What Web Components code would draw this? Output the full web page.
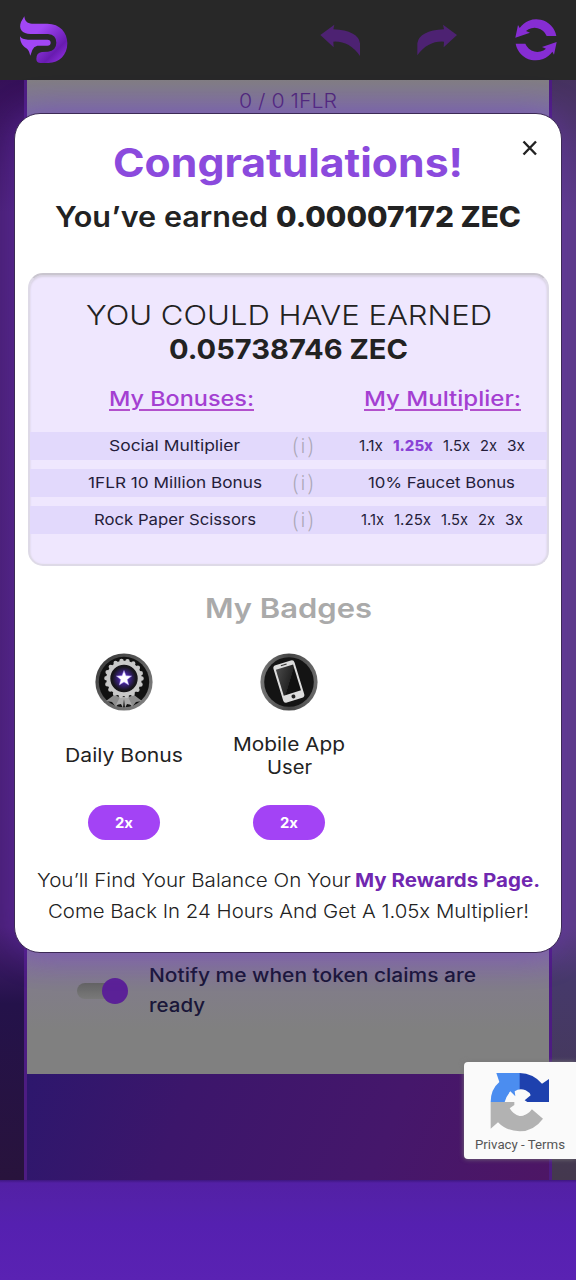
<!DOCTYPE html>
<html lang="en">
<head>
<meta charset="utf-8">
<title>Rewards</title>
<style>
html,body{margin:0;height:100%;background:#5720b2}
body{font-family:Inter,"Open Sans",sans-serif;color:#222}
</style>
</head>
<body>
<reward-app></reward-app>
<script>
const define=(name,html,ready)=>customElements.define(name,class extends HTMLElement{
  constructor(){super();this.attachShadow({mode:'open'}).innerHTML=html;}
  connectedCallback(){if(ready)ready(this,this.shadowRoot);}
});

/* Single line of text set to a given measure. */
define('fit-text',`<style>
:host{display:inline-block;white-space:nowrap;text-align:left;flex:none}
span{display:inline-block;transform-origin:0 50%;color:inherit}
:host([shade]) span{color:#a43fd2;text-decoration:underline;text-decoration-color:#b350cc;text-decoration-thickness:1.7px;text-underline-offset:2.5px}
</style><div><span><slot></slot></span></div>`,(el,root)=>{
  const w=+el.getAttribute('w'),s=root.querySelector('span');
  el.style.width=w+'px';
  s.style.transform='scaleX('+w/s.getBoundingClientRect().width+')';
});

define('top-bar',`<style>
:host{display:block;height:80px;background:#282828}
svg{display:block}
</style><svg width="576" height="80" viewBox="0 0 1728 240">
<defs><linearGradient id="g" x1="0" y1="0" x2="1" y2="1"><stop offset=".35" stop-color="#a146f5"/><stop offset=".75" stop-color="#681bb0"/><stop offset="1" stop-color="#9b35ed"/></linearGradient></defs>
<path fill="url(#g)" d="M73 49C74 62 81 71 96 71H142C180 71 202 98 202 130C202 165 178 189 145 189H122Q109 189 109 177Q109 158 126 156L144 155Q169 151 169 128Q169 104 144 102H92C66 102 55 86 63 66Z"/>
<path fill="#a146f5" d="M60 109Q66 119 84 119H142Q152 119 152 128Q152 137 142 137H112Q101 140 97 150L91 167C87 155 87 152 79 145C66 137 60 125 60 109Z"/>
<path fill="#4d2272" d="M961 105L1003 74L1000 88Q1074 92 1080 130L1080 168Q1047 122 1000 125L1001 142Z"/>
<path fill="#4d2272" d="M1371 105L1329 74L1332 88Q1258 92 1252 130L1252 166Q1284 122 1332 125L1331 142Z"/>
<g fill="#862dd3"><path d="M1669 108A61 61 0 0 0 1559 84L1554 75L1546 113L1590 98L1578 93A39 39 0 0 1 1640 108Z"/><path d="M1547 131A61 61 0 0 0 1657 155L1662 164L1670 126L1626 141L1638 146A39 39 0 0 1 1576 131Z"/></g>
</svg>`);

define('page-behind',`<style>
:host{display:grid;grid-template-columns:24px 528px 24px;height:1100px;background:#281343}
.l{background:linear-gradient(#351058 0,#482073 12%,#481f74 77%,#24124a 84%,#28133c 100%)}
.r{background:linear-gradient(#46325f 0,#5b3c84 12%,#5b3c84 77%,#46396a 82%,#44384e 100%)}
.m{display:flex;flex-direction:column;border:solid #4d1c82;border-width:0 3px;box-sizing:border-box;background:linear-gradient(112deg,#2d176d 0,#3c166b 30%,#45176b 68%,#4d1665 100%);background-size:100% 107px;background-position:bottom;background-repeat:no-repeat}
.c{height:994px;box-sizing:border-box;background:linear-gradient(#827e83 0,#7d73a0 34px,#8270a0 870px,#817d88 910px,#808080 950px);display:flex;flex-direction:column;justify-content:space-between}
.t{font-size:19.5px;line-height:42px;font-weight:300;color:#4e2777;text-align:center}
.n{display:flex;height:114px;padding-left:50px;color:#191638;font-weight:500;font-size:18.6px;line-height:30px}
.sw{width:51px;height:26px;margin:18px 21px 0 0;display:flex;align-items:center;background:none}
.sw b{width:38px;height:16px;border-radius:8px 0 0 8px;background:linear-gradient(#646464,#797979);margin-right:-13px}
.sw i{width:26px;height:26px;border-radius:50%;background:#5b2197}
.n div:last-child{display:flex;flex-direction:column}
</style><div class="l"></div><div class="m"><div class="c"><div class="t"><fit-text w="98">0 / 0 1FLR</fit-text></div>
<div class="n"><div class="sw"><b></b><i></i></div><div><fit-text w="327">Notify me when token claims are</fit-text><fit-text w="56">ready</fit-text></div></div></div></div><div class="r"></div>`);

define('bonus-row',`<style>
:host{display:flex;align-items:center;height:28px;margin-bottom:9px;background:#e2d9fc;font-size:15px;line-height:28px;color:#251d3a}
.a{width:262px;padding-left:27px;box-sizing:border-box;display:flex;justify-content:center;flex:none}
.i{width:22px;color:#aaa7b6;font:20px/28px Roboto,sans-serif;text-align:center;flex:none}
.b{width:233px;padding-left:22px;box-sizing:border-box;display:flex;justify-content:center;gap:10px;flex:none}
</style><div class="a"><slot name="name"></slot></div><div class="i"><fit-text w="20">( i )</fit-text></div><div class="b"><slot></slot></div>`);

define('bonus-panel',`<style>
:host{display:block;box-sizing:border-box;width:521px;height:293px;margin-left:13px;padding-top:23px;border-radius:15px;background:#efe7fe;border:2px solid #dedae7;border-top-color:#c9c5cf;box-shadow:inset 0 2px 2px #d8d2e2,inset 0 0 2px #e2dbee;text-align:center}
.h{font-size:27.5px;line-height:34px;height:34px}
.x{font-weight:300}.y{font-weight:700}
.k{display:flex;padding:18px 0 0 79px;gap:110px;height:49px;box-sizing:border-box;font-size:20.6px;line-height:30px;font-weight:500;margin-bottom:17px}
.on{color:#8a42d6;font-weight:800}
</style>
<div class="h x"><fit-text w="406">YOU COULD HAVE EARNED</fit-text></div>
<div class="h y"><fit-text w="239">0.05738746 ZEC</fit-text></div>
<div class="k"><fit-text shade w="145">My Bonuses:</fit-text><fit-text shade w="157">My Multiplier:</fit-text></div>
<div>
<bonus-row><fit-text slot="name" w="131">Social Multiplier</fit-text><fit-text w="24">1.1x</fit-text><fit-text class="on" w="40">1.25x</fit-text><fit-text w="27">1.5x</fit-text><fit-text w="17">2x</fit-text><fit-text w="18">3x</fit-text></bonus-row>
<bonus-row><fit-text slot="name" w="174">1FLR 10 Million Bonus</fit-text><fit-text w="147">10% Faucet Bonus</fit-text></bonus-row>
<bonus-row><fit-text slot="name" w="162">Rock Paper Scissors</fit-text><fit-text w="23">1.1x</fit-text><fit-text w="37">1.25x</fit-text><fit-text w="27">1.5x</fit-text><fit-text w="17">2x</fit-text><fit-text w="18">3x</fit-text></bonus-row>
</div>`);

define('badge-item',`<style>
:host{display:flex;flex-direction:column;align-items:center;width:165px}
.n{height:94px;padding-bottom:5px;box-sizing:border-box;display:flex;flex-direction:column;align-items:center;justify-content:center;font-size:18.5px;line-height:23px}
.p{width:72px;height:35px;border-radius:18px;background:#a343f5;color:#fff;font-weight:700;font-size:14.3px;line-height:35px;text-align:center}
</style><slot name="icon"></slot><div class="n"><slot></slot></div><div class="p"><fit-text w="18">2x</fit-text></div>`);

define('medal-icon',`<style>:host,svg{display:block}</style><svg width="58" height="58" viewBox="-29 -29 58 58">
<defs><linearGradient id="m" x2="1" y2="1"><stop stop-color="#333"/><stop offset="1" stop-color="#8b8b8b"/></linearGradient><radialGradient id="v"><stop stop-color="#7040e0"/><stop offset=".45" stop-color="#3c2282"/><stop offset=".9" stop-color="#17151c"/></radialGradient></defs>
<circle r="28.6" fill="url(#m)"/><circle r="25.2" fill="#111"/>
<path d="M-10 13L-18 19L-12 20L-8 25L-2 16ZM10 13L18 19L12 20L8 25L2 16Z" fill="#8d8d8d"/>
<path d="M-4 15L-8 23L-3 22L-1 26L0 17L1 26L3 22L8 23L4 15Z" fill="#aaa"/>
<g transform="translate(0,-3.5)"><circle r="17.6" fill="none" stroke="#c6c6c6" stroke-width="4.4" stroke-dasharray="0 6.143" stroke-linecap="round"/><circle r="15.7" fill="#171519" stroke="#c9c9c9" stroke-width="4"/><circle r="13" fill="url(#v)"/><path fill="#fff" stroke="#a98cff" stroke-width=".5" d="M0-8L2-2.8L7.6-2.5L3.3 1.1L4.7 6.5L0 3.5L-4.7 6.5L-3.3 1.1L-7.6-2.5L-2-2.8Z"/></g></svg>`);

define('phone-icon',`<style>:host,svg{display:block}</style><svg width="58" height="58" viewBox="-29 -29 58 58">
<defs><linearGradient id="m"><stop stop-color="#777"/><stop offset=".5" stop-color="#444"/><stop offset="1" stop-color="#6b6b6b"/></linearGradient><linearGradient id="s" x2="1" y2="1"><stop stop-color="#4a4a4a"/><stop offset=".55" stop-color="#242424"/><stop offset=".56" stop-color="#111"/></linearGradient></defs>
<circle r="28.6" fill="url(#m)"/><circle r="24.8" fill="#141414"/>
<g transform="rotate(-17)"><rect x="-11" y="-20" width="22" height="39" rx="3" fill="#ddd"/><rect x="-9" y="-15.5" width="18" height="27" fill="url(#s)"/><path d="M-3-18H3" stroke="#333"/><circle cy="15.2" r="2" fill="#222"/></g></svg>`);

define('reward-dialog',`<style>
:host{display:block;position:absolute;left:14px;top:113px;width:548px;height:840px;box-sizing:border-box;border:1px solid #3c2a55;border-radius:26px;background:#fff;box-shadow:0 0 34px rgba(116,50,205,.45);text-align:center}
.x{position:absolute;left:507px;top:26px}
.c{height:60px;padding-top:19px;box-sizing:border-box;line-height:60px;font-size:39.4px;font-weight:700;color:#8b4add}
.e{display:flex;justify-content:center;gap:8px;height:40px;line-height:40px;margin:23px 0 36px;font-size:28px;font-weight:600}
.e .z{font-weight:800}
.b{margin-top:22px;height:40px;line-height:40px;font-size:27.6px;font-weight:600;color:#aaa}
.g{display:flex;margin:25px 0 0 26.5px}
.f{margin-top:25px;font-size:18.6px;line-height:30px;font-weight:300;color:#222}
.f div{display:flex;justify-content:center;gap:4px;height:30.5px}
.f .w{font-weight:700;color:#7027b0}
</style>
<svg class="x" width="16" height="16" viewBox="0 0 16 16"><path d="M1.5 1.5L14 14.5M14 1.5L1.5 14.5" stroke="#222" stroke-width="2.4"/></svg>
<div class="c"><fit-text w="350">Congratulations!</fit-text></div>
<div class="e"><fit-text w="213">You’ve earned</fit-text><fit-text class="z" w="245">0.00007172 ZEC</fit-text></div>
<bonus-panel></bonus-panel>
<div class="b"><fit-text w="167">My Badges</fit-text></div>
<div class="g"><badge-item><medal-icon slot="icon"></medal-icon><fit-text w="118">Daily Bonus</fit-text></badge-item><badge-item><phone-icon slot="icon"></phone-icon><fit-text w="112">Mobile App</fit-text><fit-text w="45">User</fit-text></badge-item></div>
<div class="f"><div><fit-text w="314">You’ll Find Your Balance On Your</fit-text><fit-text class="w" w="185">My Rewards Page.</fit-text></div><div><fit-text w="481">Come Back In 24 Hours And Get A 1.05x Multiplier!</fit-text></div></div>`);

define('captcha-badge',`<style>
:host{position:absolute;left:464px;top:1062px;width:112px;height:97px;box-sizing:border-box;padding-top:10px;display:flex;flex-direction:column;align-items:center;background:#fafafa;border-radius:4px 0 0 4px;box-shadow:0 0 5px #777;font:12px/24px Roboto,sans-serif;color:#555}
svg{flex:none;margin-bottom:1px}
</style><svg width="60" height="60" viewBox="18 18 180 180">
<path fill="#4b8df0" d="M37 21H108V108H20Q20 70 46 48Z"/>
<path fill="#1e41ae" d="M107 21Q147 22 174 53L195 39V108H107Z"/>
<path fill="#b2b2b2" d="M20 108H107V150Q127 148 142 128L177 158Q150 195 107 196Q67 195 42 169L20 188Z"/>
<path fill="#fafafa" d="M62 108Q66 92 79 76L94 91L92 76Q107 65 125 73Q137 79 140 88L122 103L130 108L145 128Q130 149 107 150Q88 146 77 127L91 117V108Z"/></svg><fit-text w="90">Privacy - Terms</fit-text>`);

define('reward-app',`<style>
:host{display:block;position:relative;width:576px;height:1280px;overflow:hidden}
footer{height:100px;background:linear-gradient(#3e1780 0,#5320a5 3px,#5421aa 25px,#5520b0 45px,#5a22b3 100%)}
</style><top-bar></top-bar><page-behind></page-behind><footer></footer><reward-dialog></reward-dialog><captcha-badge></captcha-badge>`);
</script>
</body>
</html>
